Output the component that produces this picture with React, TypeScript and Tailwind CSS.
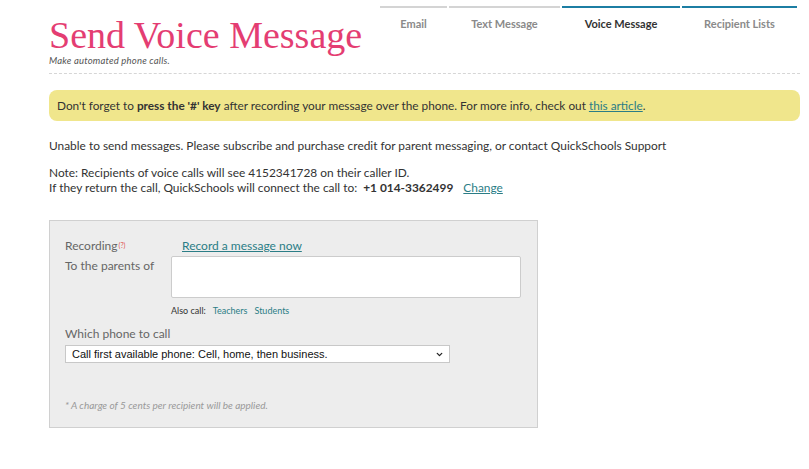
import { ChevronDown } from "lucide-react";

const tabs = [
  { label: "Email", width: "w-[67px]", active: false, bar: "bg-[#d4d4d4]" },
  { label: "Text Message", width: "w-[111px]", active: false, bar: "bg-[#d4d4d4]" },
  { label: "Voice Message", width: "w-[118px]", active: true, bar: "bg-[#1c7ea3]" },
  { label: "Recipient Lists", width: "w-[115px]", active: false, bar: "bg-[#1c7ea3]" },
];

export default function App() {
  return (
    <div className="min-h-[469px] bg-white pl-[49px] pr-[9px] pt-[6px] font-['Lato','Open_Sans',sans-serif] text-[#333]">
      {/* header */}
      <div className="flex h-[68px] justify-between border-b border-dashed border-[#d6d6d6]">
        <div className="pt-[10px]">
          <h1 className="font-['Liberation_Serif',serif] text-[38px] leading-[38px] font-light text-[#e43d72]">
            Send Voice Message
          </h1>
          <p className="mt-[1px] text-[9.5px] leading-[11px] tracking-[0.2px] italic text-[#555]">
            Make automated phone calls.
          </p>
        </div>
        <div className="mr-[3px] flex gap-[2px]">
          {tabs.map((t) => (
            <div key={t.label} className={`${t.width} flex flex-col items-center`}>
              <div className={`h-[2px] w-full ${t.bar}`} />
              <span
                className={`mt-[9px] text-[11px] leading-[14px] font-bold ${
                  t.active ? "text-[#333]" : "text-[#8a8a8a]"
                }`}
              >
                {t.label}
              </span>
            </div>
          ))}
        </div>
      </div>

      {/* banner */}
      <div className="mt-[16px] flex h-[31px] items-center rounded-[8px] bg-[#f0e68c] px-[8px] text-[11.8px]">
        <span>
          Don't forget to <b>press the '#' key</b> after recording your message over the phone. For more info, check
          out <a className="text-[#2b7d86] underline">this article</a>.
        </span>
      </div>

      <p className="mt-[17px] text-[11.9px] leading-[15px]">
        Unable to send messages. Please subscribe and purchase credit for parent messaging, or contact QuickSchools
        Support
      </p>

      <div className="mt-[12px] text-[11.9px] leading-[15px]">
        <p>Note: Recipients of voice calls will see 4152341728 on their caller ID.</p>
        <p>
          If they return the call, QuickSchools will connect the call to:&nbsp; <b>+1 014-3362499</b>
          <a className="ml-[10px] text-[#2b7d86] underline">Change</a>
        </p>
      </div>

      {/* form box */}
      <div className="mt-[25px] h-[208px] w-[489px] border border-[#d0d0d0] bg-[#ededed] pl-[15px] pt-[17px] text-[12px] leading-[15px]">
        <div className="flex items-end">
          <span className="w-[117px] text-[#666]">
            Recording
            <sup className="relative -top-[2px] ml-[1px] text-[7px] text-[#e05050]">(?)</sup>
          </span>
          <a className="text-[#2b7d86] underline">Record a message now</a>
        </div>
        <div className="mt-[3px] flex">
          <span className="w-[106px] pt-[2px] text-[#666]">To the parents of</span>
          <div className="flex flex-col">
            <textarea className="h-[42px] w-[350px] resize-none rounded-[2px] border border-[#ccc] bg-white" />
            <div className="mt-[7px] flex gap-[7px] text-[9px] leading-[12px]">
              <span className="text-[#333]">Also call:</span>
              <a className="text-[#2b7d86]">Teachers</a>
              <a className="text-[#2b7d86]">Students</a>
            </div>
          </div>
        </div>
        <p className="mt-[9px] text-[#666]">Which phone to call</p>
        <div className="relative mt-[4px] w-[385px]">
          <select className="h-[18px] w-full appearance-none border border-[#c8c8c8] bg-white pl-[6px] font-['Liberation_Sans',sans-serif] text-[11px] text-[#111]">
            <option>Call first available phone: Cell, home, then business.</option>
          </select>
          <ChevronDown
            className="pointer-events-none absolute top-[5px] right-[6px] h-[9px] w-[9px] text-[#222]"
            strokeWidth={3.5}
          />
        </div>
        <p className="mt-[36px] text-[10px] leading-[12px] italic text-[#999]">
          * A charge of 5 cents per recipient will be applied.
        </p>
      </div>
    </div>
  );
}
